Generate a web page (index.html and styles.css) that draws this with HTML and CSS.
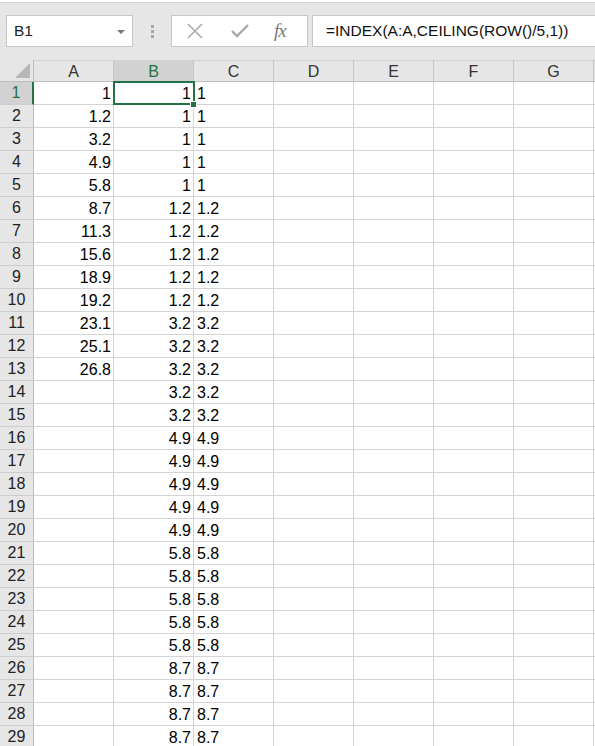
FILE: index.html
```html
<!DOCTYPE html>
<html>
<head>
<meta charset="utf-8">
<link rel="stylesheet" href="styles.css">
</head>
<body>
<div class="toolbar">
  <div class="namebox"><span class="name">B1</span><span class="arrow"></span></div>
  <div class="grip"><i></i><i></i><i></i></div>
  <div class="btns">
    <svg class="ico" width="18" height="16" viewBox="0 0 18 16"><path d="M2 1 L16 15 M16 1 L2 15" stroke="#a9a9a9" stroke-width="1.6" fill="none"/></svg>
    <svg class="ico" width="18" height="16" viewBox="0 0 18 16"><path d="M1 8 L6 13 L17 2" stroke="#a9a9a9" stroke-width="2.4" fill="none"/></svg>
    <span class="fx">fx</span>
  </div>
  <div class="formula">=INDEX(A:A,CEILING(ROW()/5,1))</div>
</div>
<div class="sheet">
  <div class="row head">
    <div class="rh corner"><span class="tri"></span></div>
    <div class="ch">A</div><div class="ch sel">B</div><div class="ch">C</div><div class="ch">D</div><div class="ch">E</div><div class="ch">F</div><div class="ch">G</div><div class="ch h">&nbsp;</div>
  </div>
  <div class="row"><div class="rh sel">1</div><div class="c r">1</div><div class="c r active">1<span class="box"></span><span class="handle"></span></div><div class="c">1</div><div class="c"></div><div class="c"></div><div class="c"></div><div class="c"></div><div class="c h"></div></div>
  <div class="row"><div class="rh">2</div><div class="c r">1.2</div><div class="c r">1</div><div class="c">1</div><div class="c"></div><div class="c"></div><div class="c"></div><div class="c"></div><div class="c h"></div></div>
  <div class="row"><div class="rh">3</div><div class="c r">3.2</div><div class="c r">1</div><div class="c">1</div><div class="c"></div><div class="c"></div><div class="c"></div><div class="c"></div><div class="c h"></div></div>
  <div class="row"><div class="rh">4</div><div class="c r">4.9</div><div class="c r">1</div><div class="c">1</div><div class="c"></div><div class="c"></div><div class="c"></div><div class="c"></div><div class="c h"></div></div>
  <div class="row"><div class="rh">5</div><div class="c r">5.8</div><div class="c r">1</div><div class="c">1</div><div class="c"></div><div class="c"></div><div class="c"></div><div class="c"></div><div class="c h"></div></div>
  <div class="row"><div class="rh">6</div><div class="c r">8.7</div><div class="c r">1.2</div><div class="c">1.2</div><div class="c"></div><div class="c"></div><div class="c"></div><div class="c"></div><div class="c h"></div></div>
  <div class="row"><div class="rh">7</div><div class="c r">11.3</div><div class="c r">1.2</div><div class="c">1.2</div><div class="c"></div><div class="c"></div><div class="c"></div><div class="c"></div><div class="c h"></div></div>
  <div class="row"><div class="rh">8</div><div class="c r">15.6</div><div class="c r">1.2</div><div class="c">1.2</div><div class="c"></div><div class="c"></div><div class="c"></div><div class="c"></div><div class="c h"></div></div>
  <div class="row"><div class="rh">9</div><div class="c r">18.9</div><div class="c r">1.2</div><div class="c">1.2</div><div class="c"></div><div class="c"></div><div class="c"></div><div class="c"></div><div class="c h"></div></div>
  <div class="row"><div class="rh">10</div><div class="c r">19.2</div><div class="c r">1.2</div><div class="c">1.2</div><div class="c"></div><div class="c"></div><div class="c"></div><div class="c"></div><div class="c h"></div></div>
  <div class="row"><div class="rh">11</div><div class="c r">23.1</div><div class="c r">3.2</div><div class="c">3.2</div><div class="c"></div><div class="c"></div><div class="c"></div><div class="c"></div><div class="c h"></div></div>
  <div class="row"><div class="rh">12</div><div class="c r">25.1</div><div class="c r">3.2</div><div class="c">3.2</div><div class="c"></div><div class="c"></div><div class="c"></div><div class="c"></div><div class="c h"></div></div>
  <div class="row"><div class="rh">13</div><div class="c r">26.8</div><div class="c r">3.2</div><div class="c">3.2</div><div class="c"></div><div class="c"></div><div class="c"></div><div class="c"></div><div class="c h"></div></div>
  <div class="row"><div class="rh">14</div><div class="c r"></div><div class="c r">3.2</div><div class="c">3.2</div><div class="c"></div><div class="c"></div><div class="c"></div><div class="c"></div><div class="c h"></div></div>
  <div class="row"><div class="rh">15</div><div class="c r"></div><div class="c r">3.2</div><div class="c">3.2</div><div class="c"></div><div class="c"></div><div class="c"></div><div class="c"></div><div class="c h"></div></div>
  <div class="row"><div class="rh">16</div><div class="c r"></div><div class="c r">4.9</div><div class="c">4.9</div><div class="c"></div><div class="c"></div><div class="c"></div><div class="c"></div><div class="c h"></div></div>
  <div class="row"><div class="rh">17</div><div class="c r"></div><div class="c r">4.9</div><div class="c">4.9</div><div class="c"></div><div class="c"></div><div class="c"></div><div class="c"></div><div class="c h"></div></div>
  <div class="row"><div class="rh">18</div><div class="c r"></div><div class="c r">4.9</div><div class="c">4.9</div><div class="c"></div><div class="c"></div><div class="c"></div><div class="c"></div><div class="c h"></div></div>
  <div class="row"><div class="rh">19</div><div class="c r"></div><div class="c r">4.9</div><div class="c">4.9</div><div class="c"></div><div class="c"></div><div class="c"></div><div class="c"></div><div class="c h"></div></div>
  <div class="row"><div class="rh">20</div><div class="c r"></div><div class="c r">4.9</div><div class="c">4.9</div><div class="c"></div><div class="c"></div><div class="c"></div><div class="c"></div><div class="c h"></div></div>
  <div class="row"><div class="rh">21</div><div class="c r"></div><div class="c r">5.8</div><div class="c">5.8</div><div class="c"></div><div class="c"></div><div class="c"></div><div class="c"></div><div class="c h"></div></div>
  <div class="row"><div class="rh">22</div><div class="c r"></div><div class="c r">5.8</div><div class="c">5.8</div><div class="c"></div><div class="c"></div><div class="c"></div><div class="c"></div><div class="c h"></div></div>
  <div class="row"><div class="rh">23</div><div class="c r"></div><div class="c r">5.8</div><div class="c">5.8</div><div class="c"></div><div class="c"></div><div class="c"></div><div class="c"></div><div class="c h"></div></div>
  <div class="row"><div class="rh">24</div><div class="c r"></div><div class="c r">5.8</div><div class="c">5.8</div><div class="c"></div><div class="c"></div><div class="c"></div><div class="c"></div><div class="c h"></div></div>
  <div class="row"><div class="rh">25</div><div class="c r"></div><div class="c r">5.8</div><div class="c">5.8</div><div class="c"></div><div class="c"></div><div class="c"></div><div class="c"></div><div class="c h"></div></div>
  <div class="row"><div class="rh">26</div><div class="c r"></div><div class="c r">8.7</div><div class="c">8.7</div><div class="c"></div><div class="c"></div><div class="c"></div><div class="c"></div><div class="c h"></div></div>
  <div class="row"><div class="rh">27</div><div class="c r"></div><div class="c r">8.7</div><div class="c">8.7</div><div class="c"></div><div class="c"></div><div class="c"></div><div class="c"></div><div class="c h"></div></div>
  <div class="row"><div class="rh">28</div><div class="c r"></div><div class="c r">8.7</div><div class="c">8.7</div><div class="c"></div><div class="c"></div><div class="c"></div><div class="c"></div><div class="c h"></div></div>
  <div class="row"><div class="rh">29</div><div class="c r"></div><div class="c r">8.7</div><div class="c">8.7</div><div class="c"></div><div class="c"></div><div class="c"></div><div class="c"></div><div class="c h"></div></div>
</div>
</body>
</html>
```
FILE: styles.css
```css
html, body {
  margin: 0;
  padding: 0;
}
body {
  width: 595px;
  height: 746px;
  overflow: hidden;
  background: #ffffff;
  font-family: "Liberation Sans", Arial, sans-serif;
  color: #000;
}
.toolbar {
  margin-top: 2px;
  border-top: 1px solid #d4d4d4;
  background: #e6e6e6;
  display: flex;
  align-items: flex-start;
  padding-top: 12px;
  box-sizing: border-box;
  height: 58px;
}
.namebox {
  margin-left: 6px;
  width: 127px;
  height: 32px;
  box-sizing: border-box;
  border: 1px solid #c6c6c6;
  background: #fff;
  display: flex;
  align-items: center;
  justify-content: space-between;
  padding: 0 7px 0 7px;
}
.name {
  font-size: 15.5px;
  color: #222;
}
.arrow {
  width: 0;
  height: 0;
  border-left: 4px solid transparent;
  border-right: 4px solid transparent;
  border-top: 4px solid #777;
  margin-top: 1px;
}
.grip {
  width: 38px;
  height: 32px;
  display: flex;
  flex-direction: column;
  align-items: center;
  justify-content: center;
  gap: 2px;
}
.grip i {
  display: block;
  width: 3px;
  height: 3px;
  background: #a6a6a6;
}
.btns {
  width: 137px;
  height: 32px;
  box-sizing: border-box;
  border: 1px solid #c6c6c6;
  background: #fff;
  display: flex;
  align-items: center;
  padding-left: 14px;
  gap: 27px;
}
.fx {
  font-family: "Liberation Serif", "Times New Roman", serif;
  font-style: italic;
  font-size: 19px;
  color: #7a7a7a;
  letter-spacing: -1px;
  margin-left: -2px;
}
.formula {
  margin-left: 4px;
  flex: 1;
  height: 32px;
  box-sizing: border-box;
  border: 1px solid #c6c6c6;
  border-right: none;
  background: #fff;
  padding-left: 13px;
  font-size: 15.5px;
  line-height: 30px;
  color: #111;
  white-space: nowrap;
}
.sheet {
  display: flex;
  flex-direction: column;
}
.row {
  display: flex;
  height: 23px;
  flex: none;
}
.row.head {
  height: 22px;
  background: #e6e6e6;
}
.rh {
  width: 34px;
  flex: none;
  box-sizing: border-box;
  background: #e6e6e6;
  border-right: 1px solid #bdbdbd;
  border-bottom: 1px solid #cdcdcd;
  text-align: center;
  font-size: 16px;
  line-height: 22px;
  color: #222;
}
.rh.sel {
  background: #d2d2d2;
  color: #217346;
  border-right: 2px solid #217346;
}
.corner {
  position: relative;
  border-bottom: 1px solid #bdbdbd;
}
.tri {
  position: absolute;
  right: 3px;
  bottom: 3px;
  width: 0;
  height: 0;
  border-left: 15px solid transparent;
  border-bottom: 15px solid #b7b7b7;
}
.ch {
  width: 80px;
  flex: none;
  box-sizing: border-box;
  border-top: 1px solid #d0d0d0;
  border-right: 1px solid #c6c6c6;
  border-bottom: 1px solid #bdbdbd;
  text-align: center;
  font-size: 16px;
  line-height: 21px;
  color: #333;
}
.ch.sel {
  background: #d2d2d2;
  color: #217346;
  border-bottom: 1px solid #217346;
}
.ch.h, .c.h {
  width: 2px;
}
.c {
  width: 80px;
  flex: none;
  box-sizing: border-box;
  border-right: 1px solid #d4d4d4;
  border-bottom: 1px solid #d4d4d4;
  font-size: 16px;
  line-height: 23px;
  padding: 0 2px 0 3px;
  white-space: nowrap;
  overflow: visible;
}
.c.r {
  text-align: right;
  padding-right: 2px;
}
.active {
  position: relative;
}
.box {
  position: absolute;
  left: -1px;
  top: -1px;
  right: -2px;
  bottom: -1px;
  border: 2px solid #217346;
}
.handle {
  position: absolute;
  right: -4px;
  bottom: -4px;
  width: 5px;
  height: 5px;
  background: #217346;
  border: 1px solid #fff;
}
```
